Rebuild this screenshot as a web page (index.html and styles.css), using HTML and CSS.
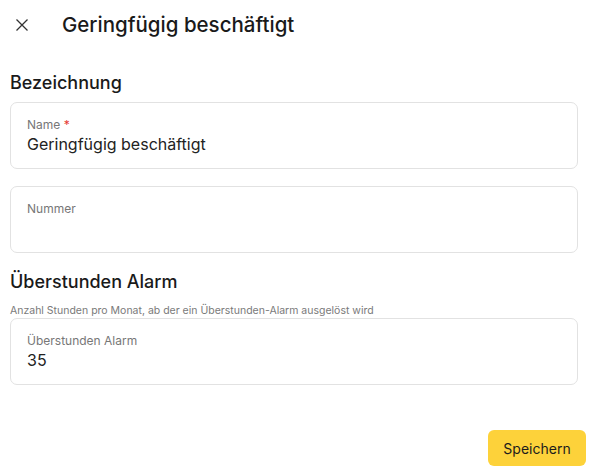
FILE: index.html
```html
<!DOCTYPE html>
<html lang="de">
<head>
<meta charset="utf-8">
<link rel="stylesheet" href="styles.css">
</head>
<body>
<div class="dialog">
  <header class="header">
    <button class="close" aria-label="Schließen">
      <svg width="12" height="12" viewBox="0 0 12 12"><path d="M0.5 0.5L11.5 11.5M11.5 0.5L0.5 11.5" stroke="#333" stroke-width="1.3" fill="none"/></svg>
    </button>
    <h1 class="title">Geringfügig beschäftigt</h1>
  </header>
  <main class="content">
    <h2 class="section-title first">Bezeichnung</h2>
    <div class="field">
      <div class="label">Name <span class="req">*</span></div>
      <div class="value">Geringfügig beschäftigt</div>
    </div>
    <div class="field second">
      <div class="label">Nummer</div>
      <div class="value"></div>
    </div>
    <h2 class="section-title">Überstunden Alarm</h2>
    <p class="helper">Anzahl Stunden pro Monat, ab der ein Überstunden-Alarm ausgelöst wird</p>
    <div class="field">
      <div class="label">Überstunden Alarm</div>
      <div class="value">35</div>
    </div>
  </main>
  <footer class="footer">
    <button class="save">Speichern</button>
  </footer>
</div>
</body>
</html>
```
FILE: styles.css
```css
* { box-sizing: border-box; }
html, body { margin: 0; padding: 0; background: #fff; }
body {
  font-family: Inter, "Noto Sans", sans-serif;
  color: #1c1c1c;
  width: 591px;
  height: 473px;
  overflow: hidden;
}
.header {
  height: 50px;
  display: flex;
  align-items: center;
  padding-left: 10px;
}
.close {
  width: 24px;
  height: 24px;
  padding: 0;
  border: 0;
  background: none;
  display: flex;
  align-items: center;
  justify-content: center;
}
.title {
  margin: 0 0 0 28px;
  font-size: 20.5px;
  line-height: 28px;
  font-weight: 500;
  color: #1a1a1a;
}
.content {
  padding: 0 13px 0 10px;
}
.section-title {
  margin: 17px 0 0;
  font-size: 18px;
  line-height: 24px;
  font-weight: 500;
  color: #1a1a1a;
}
.section-title.first {
  margin-top: 21px;
  margin-bottom: 7px;
}
.helper {
  margin: 9px 0 0;
  font-size: 10.5px;
  line-height: 15px;
  color: #7a7a7a;
}
.field {
  border: 1px solid #e2e2e2;
  border-radius: 7px;
  height: 67px;
  padding: 14px 16px 0;
}
.field.second { margin-top: 17px; }
.label {
  font-size: 12px;
  line-height: 16px;
  color: #777;
}
.req { color: #e53935; }
.value {
  font-size: 16px;
  line-height: 22px;
  color: #222;
}
.footer {
  display: flex;
  justify-content: flex-end;
  padding: 45px 5px 0 0;
}
.save {
  width: 98px;
  height: 36px;
  border: 0;
  border-radius: 6px;
  background: #fdd23a;
  font-family: Inter, "Noto Sans", sans-serif;
  font-size: 14px;
  color: #1c1c1c;
}
```
